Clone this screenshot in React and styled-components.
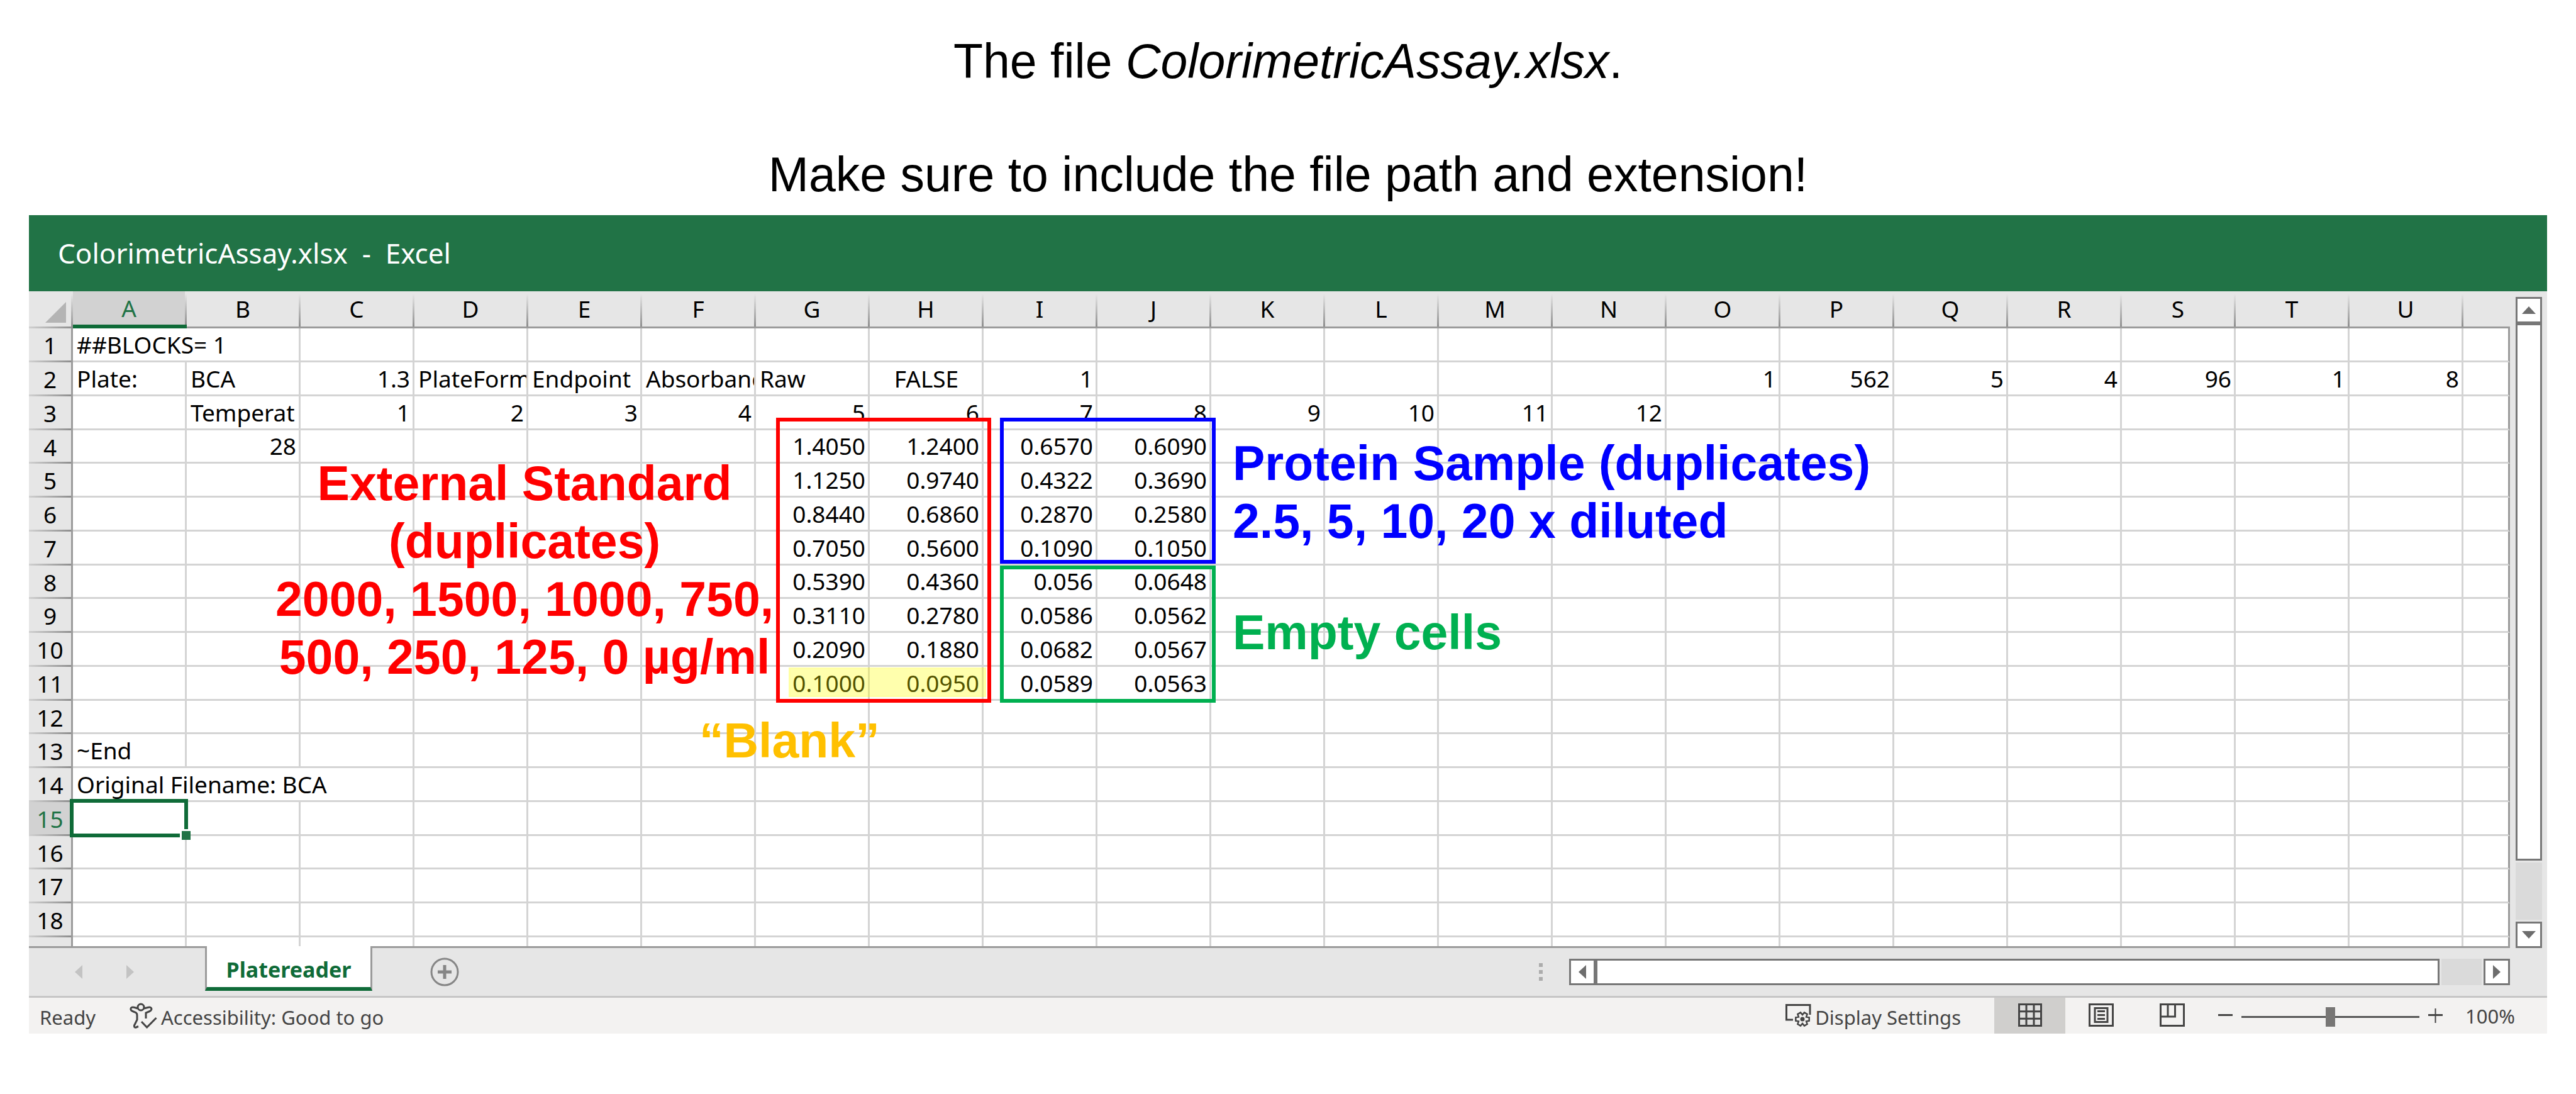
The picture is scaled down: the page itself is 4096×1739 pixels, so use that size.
import React from 'react';
import styled, { createGlobalStyle, css } from 'styled-components';

const c = {
  green: '#217346',
  deepGreen: '#0f6b38',
  chrome: '#e6e6e6',
  active: '#d2d2d2',
  track: '#dadada',
  edge: '#9b9b9b',
  grid: '#d4d4d4',
  control: '#777777',
  ink: '#444444',
  status: '#f3f2f1',
};

const GlobalStyle = createGlobalStyle`
  *, *::before, *::after { box-sizing: border-box; }
  body { margin: 0; background: #fff; }
  button { border: 0; padding: 0; margin: 0; background: none; font: inherit; color: inherit; cursor: pointer; }
`;

const Page = styled.main`
  padding: 52px 46px 96px;
  color: #000;
`;

const Caption = styled.header`
  display: grid;
  row-gap: 90px;
  padding-bottom: 20px;
  font: 77px/90px "Liberation Sans", Arial, sans-serif;
  text-align: center;
`;

const CaptionLine = styled.p`
  margin: 0;
`;

const ExcelWindow = styled.section`
  font-family: "Noto Sans", "Open Sans", sans-serif;
`;

const TitleBar = styled.h1`
  margin: 0;
  padding: 0 46px;
  background: ${c.green};
  color: #fff;
  font: 400 44px/121px "Noto Sans", "Open Sans", sans-serif;
  white-space: pre;
`;

const Workspace = styled.div`
  display: flex;
  background: ${c.chrome};
`;

const Sheet = styled.div`
  position: relative;
  flex: 1;
  min-width: 0;
  border-bottom: 3px solid ${c.edge};
`;

const Table = styled.table`
  width: 100%;
  table-layout: fixed;
  border-collapse: separate;
  border-spacing: 0;
  font-size: 37px;
  line-height: 48px;
`;

const Col = styled.col`
  width: ${(p) => (p.$kind === 'header' ? '70px' : p.$kind === 'data' ? '181px' : 'auto')};
`;

const fadeDown = `linear-gradient(${c.chrome} 4px, #8e8e8e) right / 3px 100% no-repeat`;
const fadeRight = `linear-gradient(to right, #d0d0d0, #8e8e8e) bottom / 100% 3px no-repeat`;

const ColumnHeader = styled.th`
  height: 59px;
  padding: 0 3px 0 0;
  border-bottom: 3px solid ${c.edge};
  background: ${(p) => (p.$last ? '' : `${fadeDown},`)} ${c.chrome};
  font-weight: 400;
  ${(p) => p.$active && css`
    border-bottom: 6px solid ${c.deepGreen};
    background: ${fadeDown}, ${c.active};
    color: ${c.green};
  `}
`;

const Corner = styled.td`
  height: 59px;
  padding: 7px 11px 0 0;
  background: ${fadeDown}, ${fadeRight}, ${c.chrome};
`;

const CornerMark = styled.svg`
  display: block;
  width: 33px;
  height: 33px;
  margin-left: auto;
  fill: #b4b4b4;
`;

const RowHeader = styled.th`
  padding: 0;
  border-right: 3px solid ${c.edge};
  background: ${(p) => (p.$plain ? '' : `${fadeRight},`)} ${(p) => (p.$active ? c.active : c.chrome)};
  color: ${(p) => (p.$active ? c.green : '#000')};
  font-weight: 400;
`;

const Cell = styled.td`
  position: relative;
  padding: 0 4px 0 6px;
  border-right: 3px solid ${c.grid};
  border-bottom: 3px solid ${c.grid};
  background: #fff;
  overflow: ${(p) => (p.$selected ? 'visible' : 'hidden')};
  text-align: ${(p) => p.$align || 'left'};
  white-space: nowrap;

  &:last-child { border-right-color: ${c.edge}; }
`;

const Row = styled.tr`
  height: 54px;
  &:nth-child(4n) { height: 53px; }

  &:last-child { height: 14px; }
  &:last-child > td { border-bottom: 0; }
`;

const Selection = styled.div`
  position: absolute;
  inset: -5px;
  border: 6px solid ${c.deepGreen};
  z-index: 1;

  &::after {
    content: "";
    position: absolute;
    right: -10px;
    bottom: -10px;
    width: 17px;
    height: 17px;
    border: solid #fff;
    border-width: 3px 0 0 3px;
    background: ${c.green};
  }
`;

const Marker = styled.div`
  position: absolute;
  left: ${(p) => p.$x}px;
  top: ${(p) => p.$y}px;
  width: ${(p) => p.$w}px;
  height: ${(p) => p.$h}px;
  border: 6px solid ${(p) => p.$color};
`;

const Highlight = styled.div`
  position: absolute;
  left: 1208px;
  top: 598px;
  width: 314px;
  height: 47px;
  border: 3px solid rgba(255, 255, 0, 0.05);
  background: rgba(255, 255, 0, 0.32);
`;

const Note = styled.p`
  position: absolute;
  left: ${(p) => p.$x}px;
  top: ${(p) => p.$y}px;
  margin: 0;
  color: ${(p) => p.$color};
  font: 700 77px/92px "Liberation Sans", Arial, sans-serif;
  text-align: ${(p) => p.$align || 'left'};
  white-space: nowrap;
`;

const VerticalBar = styled.div`
  display: flex;
  flex-direction: column;
  width: 59px;
  padding: 9px 8px 0 9px;
`;

const HorizontalBar = styled.div`
  display: flex;
  width: 1496px;
  height: 42px;
`;

const ArrowButton = styled.button`
  display: grid;
  place-items: center;
  flex: none;
  width: 42px;
  height: 42px;
  border: 3px solid ${c.control};
  background: #fff;
`;

const Thumb = styled.div`
  flex: 1;
  border: 3px solid ${c.control};
  background: #fff;
`;

const Track = styled.div`
  flex: none;
  background: ${c.track};
  ${(p) => (p.$vertical ? 'height: 91px; margin: 3px 0;' : 'width: 64px; margin: 0 3px;')}
`;

const Triangle = styled.svg`
  display: block;
  width: ${(p) => (p.$flat ? 22 : 12)}px;
  height: ${(p) => (p.$flat ? 12 : 22)}px;
  fill: ${(p) => p.$fill || '#6d6d6d'};
`;

const TabBar = styled.div`
  display: flex;
  align-items: center;
  height: 79px;
  padding-right: 59px;
  border-bottom: 3px solid #c6c6c6;
  background: ${c.chrome};
`;

const TabNav = styled.div`
  display: flex;
  gap: 70px;
  width: 280px;
  padding-left: 73px;
`;

const SheetTab = styled.button`
  position: relative;
  align-self: flex-start;
  width: 266px;
  height: 71px;
  margin-top: -3px;
  padding-top: 8px;
  border: solid ${c.edge};
  border-width: 0 3px;
  border-bottom: 6px solid ${c.deepGreen};
  background: #fff;
  color: ${c.deepGreen};
  font-size: 34px;
  font-weight: 700;
  line-height: 48px;
`;

const AddSheet = styled.button`
  margin-left: 92px;
`;

const Grip = styled.div`
  display: grid;
  gap: 5px;
  margin: 0 42px 0 auto;
`;

const GripDot = styled.span`
  width: 6px;
  height: 6px;
  background: #acacac;
`;

const Icon = styled.svg`
  display: block;
  flex: none;
  fill: none;
  stroke: ${(p) => p.$stroke || c.ink};
  stroke-width: 3;
`;

const StatusBar = styled.footer`
  display: flex;
  align-items: center;
  height: 57px;
  padding: 0 50px 0 17px;
  background: ${c.status};
  color: ${c.ink};
  font: 31px/48px "Noto Sans", "Open Sans", sans-serif;
  white-space: nowrap;
`;

const StatusText = styled.span`
  padding-top: 4px;
`;

const StatusButton = styled.button`
  display: flex;
  align-items: center;
  gap: 6px;
  height: 57px;
  margin-left: ${(p) => (p.$end ? 'auto' : '54px')};
  padding-right: ${(p) => (p.$end ? '53px' : '0')};
`;

const ViewButton = styled.button`
  display: grid;
  place-items: center;
  width: 113px;
  height: 57px;
  padding-bottom: 3px;
  background: ${(p) => (p.$active ? '#d0cfcd' : 'transparent')};
`;

const ZoomControls = styled.div`
  display: flex;
  align-items: center;
  gap: 14px;
  padding: 0 36px 0 17px;
`;

const ZoomSlider = styled.input`
  appearance: none;
  width: 283px;
  height: 31px;
  margin: 3px 0 0;
  background: linear-gradient(#555, #555) center / 100% 3px no-repeat;

  &::-webkit-slider-thumb {
    appearance: none;
    width: 15px;
    height: 31px;
    background: #777675;
  }
`;

const ZoomLevel = styled.button`
  width: 80px;
  text-align: left;
`;

const letters = 'ABCDEFGHIJKLMNOPQRSTU'.split('');

const rows = {
  1: { A: { v: '##BLOCKS= 1', span: 2 } },
  2: {
    A: 'Plate:', B: 'BCA', C: 1.3, D: 'PlateForm', E: 'Endpoint', F: 'Absorbanc', G: 'Raw',
    H: { v: 'FALSE', align: 'center' }, I: 1, O: 1, P: 562, Q: 5, R: 4, S: 96, T: 1, U: 8,
  },
  3: { B: 'Temperat', C: 1, D: 2, E: 3, F: 4, G: 5, H: 6, I: 7, J: 8, K: 9, L: 10, M: 11, N: 12 },
  4: { B: 28, G: '1.4050', H: '1.2400', I: '0.6570', J: '0.6090' },
  5: { G: '1.1250', H: '0.9740', I: '0.4322', J: '0.3690' },
  6: { G: '0.8440', H: '0.6860', I: '0.2870', J: '0.2580' },
  7: { G: '0.7050', H: '0.5600', I: '0.1090', J: '0.1050' },
  8: { G: '0.5390', H: '0.4360', I: '0.056', J: '0.0648' },
  9: { G: '0.3110', H: '0.2780', I: '0.0586', J: '0.0562' },
  10: { G: '0.2090', H: '0.1880', I: '0.0682', J: '0.0567' },
  11: { G: '0.1000', H: '0.0950', I: '0.0589', J: '0.0563' },
  13: { A: '~End' },
  14: { A: { v: 'Original Filename: BCA', span: 3 } },
};

const trianglePaths = {
  up: 'M11 0 L22 12 H0 Z',
  down: 'M0 0 H22 L11 12 Z',
  left: 'M12 0 V22 L0 11 Z',
  right: 'M0 0 L12 11 L0 22 Z',
};

function Arrow({ dir, fill }) {
  const flat = dir === 'up' || dir === 'down';
  return (
    <Triangle $flat={flat} $fill={fill} viewBox={flat ? '0 0 22 12' : '0 0 12 22'} aria-hidden="true">
      <path d={trianglePaths[dir]} />
    </Triangle>
  );
}

function SheetRow({ number }) {
  const data = rows[number] || {};
  const cells = [];
  for (let i = 0; i < letters.length; i += 1) {
    const raw = data[letters[i]];
    const cell = raw !== null && typeof raw === 'object' ? raw : { v: raw };
    const numeric = cell.v !== undefined && !Number.isNaN(Number(cell.v));
    const selected = number === 15 && i === 0;
    cells.push(
      <Cell
        key={letters[i]}
        colSpan={cell.span}
        $align={cell.align || (numeric ? 'right' : 'left')}
        $selected={selected}
      >
        {cell.v}
        {selected && <Selection />}
      </Cell>,
    );
    if (cell.span) i += cell.span - 1;
  }
  return (
    <Row>
      <RowHeader scope="row" $active={number === 15} $plain={number > 18}>
        {number <= 18 ? number : null}
      </RowHeader>
      {cells}
      <Cell />
    </Row>
  );
}

function gearPath(cx, cy) {
  const points = [];
  for (let k = 0; k < 6; k += 1) {
    [[-14, 11], [14, 11], [30, 7]].forEach(([offset, radius]) => {
      const a = ((k * 60 + offset) * Math.PI) / 180;
      points.push(`${(cx + radius * Math.cos(a)).toFixed(1)} ${(cy + radius * Math.sin(a)).toFixed(1)}`);
    });
  }
  return `M${points.join(' L')} Z`;
}

export default function App() {
  return (
    <Page>
      <GlobalStyle />
      <Caption>
        <CaptionLine>The file <em>ColorimetricAssay.xlsx</em>.</CaptionLine>
        <CaptionLine>Make sure to include the file path and extension!</CaptionLine>
      </Caption>

      <ExcelWindow>
        <TitleBar>{'ColorimetricAssay.xlsx  -  Excel'}</TitleBar>

        <Workspace>
          <Sheet>
            <Table>
              <colgroup>
                <Col $kind="header" />
                {letters.map((l) => <Col key={l} $kind="data" />)}
                <Col />
              </colgroup>
              <thead>
                <tr>
                  <Corner>
                    <CornerMark viewBox="0 0 33 33" aria-hidden="true"><path d="M33 0 V33 H0 Z" /></CornerMark>
                  </Corner>
                  {letters.map((l) => (
                    <ColumnHeader key={l} scope="col" $active={l === 'A'}>{l}</ColumnHeader>
                  ))}
                  <ColumnHeader $last />
                </tr>
              </thead>
              <tbody>
                {Array.from({ length: 19 }, (_, i) => <SheetRow key={i} number={i + 1} />)}
              </tbody>
            </Table>

            <Highlight />
            <Marker $color="#ff0000" $x={1188} $y={201} $w={342} $h={453} />
            <Marker $color="#0000ff" $x={1544} $y={201} $w={343} $h={232} />
            <Marker $color="#00b050" $x={1544} $y={436} $w={343} $h={218} />
            <Note $color="#ff0000" $x={392} $y={259} $align="center">
              External Standard<br />(duplicates)<br />2000, 1500, 1000, 750,<br />500, 250, 125, 0 µg/ml
            </Note>
            <Note $color="#0000ff" $x={1914} $y={227}>
              Protein Sample (duplicates)<br />2.5, 5, 10, 20 x diluted
            </Note>
            <Note $color="#00b050" $x={1914} $y={496}>Empty cells</Note>
            <Note $color="#ffc000" $x={1066} $y={668}>“Blank”</Note>
          </Sheet>

          <VerticalBar>
            <ArrowButton aria-label="Scroll up"><Arrow dir="up" /></ArrowButton>
            <Thumb />
            <Track $vertical />
            <ArrowButton aria-label="Scroll down"><Arrow dir="down" /></ArrowButton>
          </VerticalBar>
        </Workspace>

        <TabBar>
          <TabNav>
            <button aria-label="Previous sheet"><Arrow dir="left" fill="#c3c3c3" /></button>
            <button aria-label="Next sheet"><Arrow dir="right" fill="#c3c3c3" /></button>
          </TabNav>
          <SheetTab>Platereader</SheetTab>
          <AddSheet aria-label="New sheet">
            <Icon width="46" height="46" viewBox="0 0 46 46" $stroke="#868686">
              <circle cx="23" cy="23" r="21" />
              <path d="M12 23 H34 M23 12 V34" strokeWidth="5" />
            </Icon>
          </AddSheet>
          <Grip><GripDot /><GripDot /><GripDot /></Grip>
          <HorizontalBar>
            <ArrowButton aria-label="Scroll left"><Arrow dir="left" /></ArrowButton>
            <Thumb />
            <Track />
            <ArrowButton aria-label="Scroll right"><Arrow dir="right" /></ArrowButton>
          </HorizontalBar>
        </TabBar>

        <StatusBar>
          <StatusText>Ready</StatusText>
          <StatusButton>
            <Icon width="44" height="41" viewBox="0 0 44 41">
              <circle cx="18" cy="7" r="5" />
              <path d="M13 9 L8 7.5 Q2 6 1.8 10 Q2 12.5 5 13.5 L10 15.5 Q12 17 12 20 V27 L7.5 36 Q7 40 10.5 39 L14 37.5" />
              <path d="M23 9 L29 7.5 Q34.5 6 35 10 Q34.5 12.5 32 13.5 L26 16 V25" />
              <path d="M19 30 L27.6 39 L42.5 24" />
            </Icon>
            <StatusText>Accessibility: Good to go</StatusText>
          </StatusButton>

          <StatusButton $end>
            <Icon width="41" height="37" viewBox="0 0 41 37">
              <path d="M12 25 H1.5 V1.5 H39 V17" />
              <path d={gearPath(27, 24)} strokeWidth="2.5" />
              <circle cx="27" cy="24" r="3.5" fill={c.ink} stroke="none" />
            </Icon>
            <StatusText>Display Settings</StatusText>
          </StatusButton>
          <ViewButton $active aria-label="Normal view">
            <Icon width="38" height="37" viewBox="0 0 38 37">
              <rect x="1.5" y="1.5" width="35" height="34" fill="#dededd" />
              <path d="M13 1.5 V35 M25 1.5 V35 M1.5 12.8 H36 M1.5 24.2 H36" />
            </Icon>
          </ViewButton>
          <ViewButton aria-label="Page layout">
            <Icon width="40" height="37" viewBox="0 0 40 37">
              <rect x="1.5" y="1.5" width="37" height="34" />
              <rect x="10" y="7.5" width="20" height="22" />
              <path d="M14 12.5 H26 M14 18.5 H26 M14 24.5 H26" />
            </Icon>
          </ViewButton>
          <ViewButton aria-label="Page break preview">
            <Icon width="40" height="37" viewBox="0 0 40 37">
              <rect x="1.5" y="1.5" width="37" height="34" />
              <path d="M13 1.5 V21 M24.5 1.5 V22.5 M1.5 21 H24.5" />
            </Icon>
          </ViewButton>
          <ZoomControls>
            <button aria-label="Zoom out">
              <Icon width="23" height="23" viewBox="0 0 23 23"><path d="M0 10.5 H23" /></Icon>
            </button>
            <ZoomSlider type="range" min="0" max="100" defaultValue="50" aria-label="Zoom" />
            <button aria-label="Zoom in">
              <Icon width="23" height="23" viewBox="0 0 23 23">
                <path d="M0 10.5 H23" />
                <path d="M11.5 0 V23" strokeWidth="2" />
              </Icon>
            </button>
          </ZoomControls>
          <ZoomLevel>100%</ZoomLevel>
        </StatusBar>
      </ExcelWindow>
    </Page>
  );
}
